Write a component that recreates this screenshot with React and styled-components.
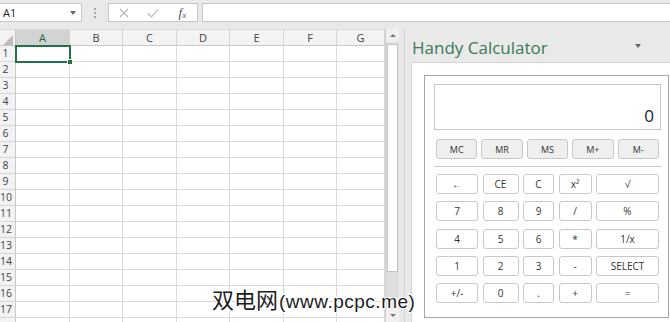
import React from 'react';
import styled, { createGlobalStyle } from 'styled-components';

const GlobalStyle = createGlobalStyle`
  html, body {
    margin: 0;
    padding: 0;
  }
  body {
    font-family: 'Open Sans', 'Noto Sans', sans-serif;
    background: #e9e9e9;
  }
`;

const COLUMNS = ['A', 'B', 'C', 'D', 'E', 'F', 'G'];
const COL_WIDTHS = [54, 53, 54, 53, 54, 53, 48];
const GRID_TEMPLATE = `16px ${COL_WIDTHS.map((w) => `${w}px`).join(' ')}`;
const ROW_COUNT = 18;
const LABELED_ROWS = 17;

const MEMORY_KEYS = ['MC', 'MR', 'MS', 'M+', 'M-'];
const KEYS = [
  ['←', 'CE', 'C', 'x²', '√'],
  ['7', '8', '9', '/', '%'],
  ['4', '5', '6', '*', '1/x'],
  ['1', '2', '3', '-', 'SELECT'],
  ['+/-', '0', '.', '+', '='],
];

const App = () => {
  const rows = Array.from({ length: ROW_COUNT }, (_, i) => i + 1);

  return (
    <Window>
      <GlobalStyle />
      <TopBar>
        <NameBox>
          A1
          <Caret />
        </NameBox>
        <Grip>
          <span />
          <span />
          <span />
        </Grip>
        <FxBox>
          <FxSlot>
            <svg width='10' height='10' viewBox='0 0 10 10'>
              <path d='M1 1 L9 9 M9 1 L1 9' stroke='#b4b4b4' strokeWidth='1.1' fill='none' />
            </svg>
          </FxSlot>
          <FxSlot>
            <svg width='12' height='10' viewBox='0 0 12 10'>
              <path d='M1 5.5 L4.5 9 L11 1.5' stroke='#b4b4b4' strokeWidth='1.1' fill='none' />
            </svg>
          </FxSlot>
          <FxSlot>
            <FxLabel>
              f<sub>x</sub>
            </FxLabel>
          </FxSlot>
        </FxBox>
        <FormulaInput />
      </TopBar>

      <Body>
        <Sheet>
          <HeaderRow>
            <Corner>
              <CornerMark />
            </Corner>
            {COLUMNS.map((c) => (
              <ColHeader key={c} $active={c === 'A'}>
                {c}
              </ColHeader>
            ))}
          </HeaderRow>
          {rows.map((r) => (
            <GridRow key={r}>
              <RowHeader>{r <= LABELED_ROWS ? r : ''}</RowHeader>
              {COLUMNS.map((c) => (
                <Cell key={c} $active={r === 1 && c === 'A'} />
              ))}
            </GridRow>
          ))}
        </Sheet>

        <ScrollBar>
          <ScrollArrow>
            <ArrowUp />
          </ScrollArrow>
          <Thumb />
          <ScrollTrack />
          <ScrollArrow>
            <ArrowDown />
          </ScrollArrow>
        </ScrollBar>

        <Panel>
          <PanelHeader>
            <PanelTitle>Handy Calculator</PanelTitle>
            <Caret />
          </PanelHeader>
          <PanelBody>
            <Calculator>
              <Display>0</Display>
              <MemoryRow>
                {MEMORY_KEYS.map((k) => (
                  <MemoryKey key={k}>{k}</MemoryKey>
                ))}
              </MemoryRow>
              <Divider />
              <Keypad>
                {KEYS.flat().map((k, i) => (
                  <Key key={i}>{k}</Key>
                ))}
              </Keypad>
            </Calculator>
          </PanelBody>
        </Panel>
      </Body>

      <Watermark>
        双电网<WatermarkLatin>(www.pcpc.me)</WatermarkLatin>
      </Watermark>
    </Window>
  );
};

const Window = styled.div`
  width: 670px;
  height: 322px;
  overflow: hidden;
  position: relative;
  background: #e9e9e9;
  display: flex;
  flex-direction: column;
`;

const TopBar = styled.div`
  height: 29px;
  flex: none;
  box-sizing: border-box;
  padding-top: 3px;
  display: flex;
  align-items: flex-start;
`;

const NameBox = styled.div`
  width: 82px;
  height: 19px;
  box-sizing: border-box;
  background: #fff;
  border: 1px solid #c6c6c6;
  border-left: none;
  display: flex;
  align-items: center;
  justify-content: space-between;
  padding: 0 5px 0 3px;
  font-size: 11px;
  color: #222;
`;

const Caret = styled.span`
  width: 0;
  height: 0;
  border-left: 3.5px solid transparent;
  border-right: 3.5px solid transparent;
  border-top: 4px solid #666;
`;

const Grip = styled.div`
  width: 2px;
  height: 19px;
  margin: 0 12px 0 12px;
  display: flex;
  flex-direction: column;
  justify-content: center;
  gap: 2px;
  span {
    width: 2px;
    height: 2px;
    background: #a8a8a8;
  }
`;

const FxBox = styled.div`
  width: 90px;
  height: 19px;
  box-sizing: border-box;
  background: #fff;
  border: 1px solid #c6c6c6;
  display: grid;
  grid-template-columns: repeat(3, 1fr);
`;

const FxSlot = styled.div`
  display: flex;
  align-items: center;
  justify-content: center;
`;

const FxLabel = styled.span`
  font-family: 'Liberation Serif', serif;
  font-style: italic;
  font-size: 13px;
  color: #555;
  line-height: 1;
  sub {
    font-size: 9px;
    vertical-align: -1px;
  }
`;

const FormulaInput = styled.div`
  flex: 1;
  height: 19px;
  margin-left: 4px;
  box-sizing: border-box;
  background: #fff;
  border: 1px solid #c6c6c6;
  border-right: none;
`;

const Body = styled.div`
  flex: 1;
  min-height: 0;
  display: flex;
`;

const Sheet = styled.div`
  width: 385px;
  flex: none;
  background: #fff;
  overflow: hidden;
  display: flex;
  flex-direction: column;
`;

const HeaderRow = styled.div`
  display: grid;
  grid-template-columns: ${GRID_TEMPLATE};
  height: 15px;
  flex: none;
  background: #f3f3f3;
  border-bottom: 1px solid #c9c9c9;
  border-top: 1px solid #dadada;
`;

const Corner = styled.div`
  position: relative;
  border-right: 1px solid #c9c9c9;
`;

const CornerMark = styled.div`
  position: absolute;
  right: 2px;
  bottom: 2px;
  width: 10px;
  height: 10px;
  background: #bdbdbd;
  clip-path: polygon(100% 0, 100% 100%, 0 100%);
`;

const ColHeader = styled.div`
  box-sizing: border-box;
  border-right: 1px solid #d4d4d4;
  background: ${(p) => (p.$active ? '#d3d3d3' : 'transparent')};
  border-bottom: ${(p) => (p.$active ? '2px solid #217346' : 'none')};
  color: ${(p) => (p.$active ? '#1e6b41' : '#444')};
  font-size: 11px;
  line-height: 15px;
  text-align: center;
`;

const GridRow = styled.div`
  display: grid;
  grid-template-columns: ${GRID_TEMPLATE};
  height: 16px;
  flex: none;
`;

const RowHeader = styled.div`
  box-sizing: border-box;
  background: #f3f3f3;
  border-right: 1px solid #c9c9c9;
  border-bottom: 1px solid #d6d6d6;
  color: #444;
  font-size: 10.5px;
  line-height: 15px;
  padding-right: 4px;
  text-align: center;
`;

const Cell = styled.div`
  box-sizing: border-box;
  position: relative;
  border-right: 1px solid #dadada;
  border-bottom: 1px solid #dadada;
  ${(p) =>
    p.$active &&
    `
    outline: 2px solid #217346;
    outline-offset: -1px;
    z-index: 1;
    &::after {
      content: '';
      position: absolute;
      right: -4px;
      bottom: -4px;
      width: 4px;
      height: 4px;
      background: #217346;
      border: 1px solid #fff;
    }
  `}
`;

const ScrollBar = styled.div`
  width: 13px;
  flex: none;
  background: #dedede;
  border-left: 1px solid #d0d0d0;
  display: flex;
  flex-direction: column;
`;

const ScrollArrow = styled.div`
  height: 13px;
  flex: none;
  display: flex;
  align-items: center;
  justify-content: center;
  background: #f0f0f0;
`;

const ArrowUp = styled.span`
  width: 0;
  height: 0;
  border-left: 3px solid transparent;
  border-right: 3px solid transparent;
  border-bottom: 3px solid #777;
`;

const ArrowDown = styled(ArrowUp)`
  border-bottom: none;
  border-top: 3px solid #777;
`;

const Thumb = styled.div`
  height: 228px;
  margin: 2px 1px 0;
  flex: none;
  box-sizing: border-box;
  background: #fff;
  border: 1px solid #c4c4c4;
`;

const ScrollTrack = styled.div`
  flex: 1;
`;

const Panel = styled.div`
  flex: 1;
  margin-left: 5px;
  border-left: 1px solid #d2d2d2;
  display: flex;
  flex-direction: column;
`;

const PanelHeader = styled.div`
  height: 33px;
  flex: none;
  display: flex;
  align-items: center;
  justify-content: space-between;
  padding: 0 29px 0 7px;
`;

const PanelTitle = styled.div`
  font-size: 17px;
  color: #3a7a55;
  margin-top: 4px;
`;

const PanelBody = styled.div`
  flex: 1;
  margin-left: 6px;
  background: #fff;
  border-top: 1px solid #d6d6d6;
  border-left: 1px solid #d6d6d6;
  padding: 12px 0 0 12px;
`;

const Calculator = styled.div`
  width: 245px;
  height: 243px;
  box-sizing: border-box;
  border: 1px solid #a5a5a5;
  padding: 8px 7px 0 9px;
`;

const Display = styled.div`
  height: 46px;
  box-sizing: border-box;
  border: 1px solid #c5c5c5;
  display: flex;
  align-items: flex-end;
  justify-content: flex-end;
  padding: 0 6px 5px;
  font-size: 17px;
  line-height: 1;
  color: #222;
`;

const MemoryRow = styled.div`
  margin-top: 9px;
  padding: 0 2px;
  display: grid;
  grid-template-columns: repeat(5, 1fr);
  column-gap: 4px;
`;

const KeyBase = styled.div`
  height: 20px;
  box-sizing: border-box;
  border: 1px solid #c8c8c8;
  border-radius: 3px;
  display: flex;
  align-items: center;
  justify-content: center;
  color: #333;
`;

const MemoryKey = styled(KeyBase)`
  background: #efefef;
  font-size: 9px;
`;

const Divider = styled.div`
  margin-top: 7px;
  height: 1px;
  background: #c8c8c8;
`;

const Keypad = styled.div`
  margin-top: 7px;
  padding: 0 2px;
  display: grid;
  grid-template-columns: 42px 36px 31px 33px 1fr;
  column-gap: 4.5px;
  row-gap: 7.25px;
`;

const Key = styled(KeyBase)`
  background: #fff;
  font-size: 10px;
`;

const Watermark = styled.div`
  position: absolute;
  left: 212px;
  top: 285px;
  font-family: 'Noto Sans CJK SC', sans-serif;
  font-size: 22px;
  line-height: 26px;
  color: #1c1c1c;
  text-shadow: 1px 0 #fff, -1px 0 #fff, 0 1px #fff, 0 -1px #fff, 1px 1px #fff,
    -1px -1px #fff, 1px -1px #fff, -1px 1px #fff;
  white-space: nowrap;
`;

const WatermarkLatin = styled.span`
  font-family: 'Liberation Sans', sans-serif;
  font-size: 19px;
  letter-spacing: 0.5px;
  margin-left: 1px;
`;

export default App;
